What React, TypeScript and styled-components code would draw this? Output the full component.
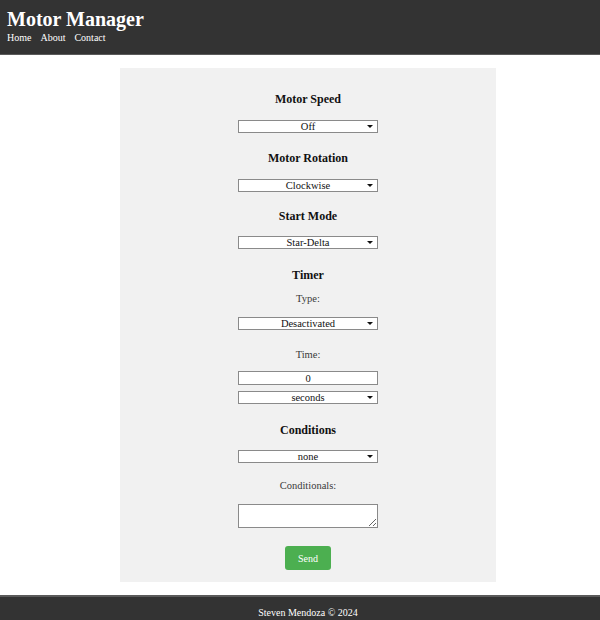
import React from "react";
import styled, { createGlobalStyle } from "styled-components";

const Global = createGlobalStyle`
  html, body { margin: 0; padding: 0; background: #ffffff; }
  body { font-family: "Liberation Serif", "Times New Roman", serif; }
  * { box-sizing: border-box; }
  select, input, textarea, button, option { font-family: "Liberation Serif", "Times New Roman", serif; }
`;

const Header = styled.header`
  background: #333333;
  color: #ffffff;
  padding: 8px 7px 10px;
  border-bottom: 1px solid #5a5a5a;
`;

const Title = styled.h1`
  margin: 0;
  font-size: 20px;
  line-height: 23px;
  font-weight: bold;
`;

const Nav = styled.nav`
  display: flex;
  gap: 9px;
  margin-top: 1px;
  font-size: 10px;
  line-height: 12px;
`;

const NavLink = styled.a`
  color: #ffffff;
  text-decoration: none;
`;

const Panel = styled.main`
  margin: 13px 0 13px 120px;
  width: 376px;
  background: #f1f1f1;
  padding: 24px 0 12px;
  display: flex;
  flex-direction: column;
  align-items: center;
`;

const Heading = styled.h3<{ $mt?: number }>`
  margin: ${(p) => p.$mt ?? 0}px 0 0;
  font-size: 12px;
  line-height: 15px;
  font-weight: bold;
  color: #111111;
`;

const Label = styled.label<{ $mt: number }>`
  margin-top: ${(p) => p.$mt}px;
  font-size: 10.5px;
  line-height: 13px;
  color: #3a3a3a;
`;

const SelectWrap = styled.div<{ $mt: number }>`
  position: relative;
  margin-top: ${(p) => p.$mt}px;
  width: 140px;
  height: 13px;
  line-height: 0;
`;

const Select = styled.select`
  appearance: none;
  -webkit-appearance: none;
  display: block;
  width: 100%;
  height: 13px;
  margin: 0;
  padding: 0;
  border: 1px solid #8a8a8a;
  border-radius: 0;
  background: #ffffff;
  font: 10.5px/11px "Liberation Serif", "Times New Roman", serif;
  color: #111111;
  text-align: center;
  text-align-last: center;
`;

const Arrow = styled.span`
  position: absolute;
  right: 5px;
  top: 5px;
  width: 0;
  height: 0;
  border-left: 3px solid transparent;
  border-right: 3px solid transparent;
  border-top: 3.5px solid #111111;
  pointer-events: none;
`;

const TextInput = styled.input<{ $mt: number }>`
  display: block;
  margin-top: ${(p) => p.$mt}px;
  width: 140px;
  height: 14px;
  padding: 0;
  border: 1px solid #8a8a8a;
  background: #ffffff;
  font: 10.5px/12px "Liberation Serif", "Times New Roman", serif;
  color: #111111;
  text-align: center;
`;

const TextArea = styled.textarea<{ $mt: number }>`
  margin-top: ${(p) => p.$mt}px;
  width: 140px;
  height: 24px;
  padding: 0;
  border: 1px solid #8a8a8a;
  background: #ffffff;
  font: 10px "Liberation Serif", "Times New Roman", serif;
  display: block;
`;

const Button = styled.button<{ $mt: number }>`
  margin-top: ${(p) => p.$mt}px;
  width: 46px;
  height: 24px;
  border: none;
  border-radius: 3px;
  background: #4caf50;
  color: #ffffff;
  font: 10px "Liberation Serif", "Times New Roman", serif;
  cursor: pointer;
`;

const Footer = styled.footer`
  background: #333333;
  border-top: 2px solid #5a5a5a;
  color: #ffffff;
  text-align: center;
  font-size: 10px;
  line-height: 12px;
  padding: 10px 0 14px 16px;
`;

function Dropdown({ mt, value, options }: { mt: number; value: string; options: string[] }) {
  return (
    <SelectWrap $mt={mt}>
      <Select defaultValue={value}>
        {options.map((o) => (
          <option key={o} value={o}>
            {o}
          </option>
        ))}
      </Select>
      <Arrow />
    </SelectWrap>
  );
}

export default function App() {
  return (
    <>
      <Global />
      <Header>
        <Title>Motor Manager</Title>
        <Nav>
          <NavLink href="#">Home</NavLink>
          <NavLink href="#">About</NavLink>
          <NavLink href="#">Contact</NavLink>
        </Nav>
      </Header>
      <Panel>
        <Heading>Motor Speed</Heading>
        <Dropdown mt={13} value="Off" options={["Off", "Low", "Medium", "High"]} />
        <Heading $mt={18}>Motor Rotation</Heading>
        <Dropdown mt={13} value="Clockwise" options={["Clockwise", "Counterclockwise"]} />
        <Heading $mt={17}>Start Mode</Heading>
        <Dropdown mt={12} value="Star-Delta" options={["Star-Delta", "Direct"]} />
        <Heading $mt={19}>Timer</Heading>
        <Label $mt={9}>Type:</Label>
        <Dropdown mt={12} value="Desactivated" options={["Desactivated", "On delay", "Off delay"]} />
        <Label $mt={18}>Time:</Label>
        <TextInput $mt={10} defaultValue="0" />
        <Dropdown mt={6} value="seconds" options={["seconds", "minutes", "hours"]} />
        <Heading $mt={19}>Conditions</Heading>
        <Dropdown mt={12} value="none" options={["none", "if", "while"]} />
        <Label $mt={16}>Conditionals:</Label>
        <TextArea $mt={12} />
        <Button $mt={18}>Send</Button>
      </Panel>
      <Footer>Steven Mendoza © 2024</Footer>
    </>
  );
}
